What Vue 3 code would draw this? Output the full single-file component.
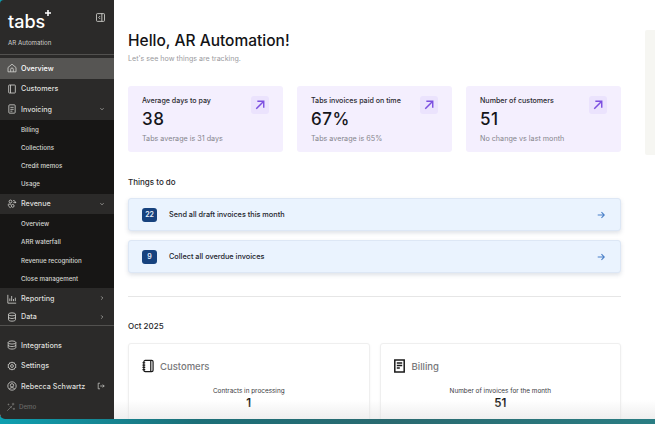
<script setup>
const stats = [
  { label: 'Average days to pay', value: '38', note: 'Tabs average is 31 days' },
  { label: 'Tabs invoices paid on time', value: '67%', note: 'Tabs average is 65%' },
  { label: 'Number of customers', value: '51', note: 'No change vs last month' }
]
const todos = [
  { count: '22', text: 'Send all draft invoices this month' },
  { count: '9', text: 'Collect all overdue invoices' }
]
</script>

<template>
  <div class="page">
    <div class="corner top"></div>
    <div class="corner bottom"></div>
    <aside class="side">
      <div class="brand">
        <span class="logo">tabs<svg class="plus" width="6" height="6" viewBox="0 0 7 7"><path d="M3.500 0v7M0 3.500h7" stroke="#fff" stroke-width="1.800"/></svg></span>
        <svg class="collapse" width="9" height="9" viewBox="0 0 10 10" fill="none" stroke="#d0d0cc" stroke-width="1"><rect x=".5" y=".7" width="9" height="8.600" rx="1"/><path d="M6.500 .7v8.600M4.600 3.400 3 5l1.600 1.600"/></svg>
      </div>
      <div class="org">AR Automation</div>
      <nav class="nav">
        <a class="item active">
          <svg class="ic" viewBox="0 0 12 12"><path d="M1.200 5.400 6 1.400l4.800 4v5.200H1.200z"/><path d="M4.400 10.600V7.600a1.600 1.600 0 0 1 3.200 0v3"/></svg>
          <span>Overview</span>
        </a>
        <a class="item">
          <svg class="ic" viewBox="0 0 12 12"><rect x="2" y="1.200" width="8" height="9.600" rx=".8"/><path d="M4.200 1.200v9.600"/></svg>
          <span>Customers</span>
        </a>
        <a class="item">
          <svg class="ic" viewBox="0 0 12 12"><rect x="2.200" y="1" width="7.600" height="10" rx="1"/><path d="M4 4h4M4 6.400h4M4 8.600h2.500"/></svg>
          <span>Invoicing</span>
          <svg class="chev" viewBox="0 0 6 6"><path d="M1.400 2.200 3 3.800l1.600-1.600"/></svg>
        </a>
        <div class="sub">
          <a>Billing</a><a>Collections</a><a>Credit memos</a><a>Usage</a>
        </div>
        <a class="item open">
          <svg class="ic" viewBox="0 0 12 12"><circle cx="4.200" cy="3" r="1.700"/><circle cx="6.800" cy="8.200" r="1.700"/><path d="M7.400 1.800c1.800.2 3 1.200 3.200 3M7.600 4.400h3.200M1.400 6.200h3.400M1.400 6.600c.2 2 1.400 3.400 3 3.800"/></svg>
          <span>Revenue</span>
          <svg class="chev" viewBox="0 0 6 6"><path d="M1.400 2.200 3 3.800l1.600-1.600"/></svg>
        </a>
        <div class="sub">
          <a>Overview</a><a>ARR waterfall</a><a>Revenue recognition</a><a>Close management</a>
        </div>
        <a class="item">
          <svg class="ic" viewBox="0 0 12 12"><path d="M1 1v10h10M3.400 8.600V5.400M5.600 8.600V2.400M7.800 8.600V6M10 8.600V4.400"/></svg>
          <span>Reporting</span>
          <svg class="chev" viewBox="0 0 6 6"><path d="M2.200 1.400 3.800 3 2.200 4.600"/></svg>
        </a>
        <a class="item last">
          <svg class="ic" viewBox="0 0 12 12"><ellipse cx="6" cy="2.800" rx="4.200" ry="1.800"/><path d="M1.800 2.800v6.400c0 1 1.900 1.800 4.200 1.800s4.200-.8 4.200-1.800V2.800M1.800 6c0 1 1.900 1.800 4.200 1.800s4.200-.8 4.200-1.800"/></svg>
          <span>Data</span>
          <svg class="chev" viewBox="0 0 6 6"><path d="M2.200 1.400 3.800 3 2.200 4.600"/></svg>
        </a>
      </nav>
      <div class="foot">
        <a class="item">
          <svg class="ic" viewBox="0 0 12 12"><ellipse cx="6" cy="3" rx="4.600" ry="1.900"/><path d="M1.400 3v6c0 1.100 2.100 1.900 4.600 1.900s4.600-.8 4.600-1.900V3M1.400 6c0 1.100 2.100 1.900 4.600 1.900s4.600-.8 4.600-1.900"/></svg>
          <span>Integrations</span>
        </a>
        <a class="item">
          <svg class="ic" viewBox="0 0 12 12"><circle cx="6" cy="6" r="1.700"/><path d="M6 1 7 2.300l1.700-.3.500 1.700 1.600.7-.6 1.600.6 1.600-1.600.7-.5 1.700L7 9.700 6 11 5 9.700l-1.700.3-.5-1.700-1.600-.7.6-1.600-.6-1.600 1.600-.7L3.300 2 5 2.300z"/></svg>
          <span>Settings</span>
        </a>
        <a class="item">
          <svg class="ic" viewBox="0 0 12 12"><circle cx="6" cy="6" r="5"/><circle cx="6" cy="5.200" r="2"/><path d="M2.800 9.800C3.600 8.400 4.800 8 6 8s2.400.4 3.200 1.800"/></svg>
          <span>Rebecca Schwartz</span>
          <svg class="logout" viewBox="0 0 10 10"><path d="M3.800 1.500H1.500v7h2.300M4 5h5M7.200 3.200 9 5 7.200 6.800"/></svg>
        </a>
        <a class="item demo">
          <svg class="ic" viewBox="0 0 12 12"><path d="M1.500 10.500 7.500 4.500M8.500 1v3M7 2.500h3M3 2v2M2 3h2M9.500 7v2.500M8.200 8.200h2.600M4.500 5 7 7.500"/></svg>
          <span>Demo</span>
        </a>
      </div>
    </aside>

    <main class="main">
      <h1>Hello, AR Automation!</h1>
      <p class="lead">Let's see how things are tracking.</p>

      <section class="stats">
        <div v-for="s in stats" :key="s.label" class="stat">
          <div>
            <div class="s-label">{{ s.label }}</div>
            <div class="s-value">{{ s.value }}</div>
            <div class="s-note">{{ s.note }}</div>
          </div>
          <span class="s-icon">
            <svg width="10" height="10" viewBox="0 0 12 12" fill="none" stroke="#7c4fe0" stroke-width="1.700"><path d="M1.500 10.500 10.500 1.500M2.800 1.500h7.700v7.700"/></svg>
          </span>
        </div>
      </section>

      <h2 class="todo-title">Things to do</h2>
      <section class="todos">
        <div v-for="t in todos" :key="t.text" class="todo">
          <span class="badge">{{ t.count }}</span>
          <span class="t-text">{{ t.text }}</span>
          <svg width="8" height="8" viewBox="0 0 9 9" fill="none" stroke="#4a80c8" stroke-width="1.200"><path d="M.8 4.500h7.400M5 1.300l3.200 3.200L5 7.700"/></svg>
        </div>
      </section>

      <hr class="rule" />

      <h2 class="month">Oct 2025</h2>
      <section class="panels">
        <div class="panel">
          <div class="p-head">
            <svg width="12" height="14" viewBox="0 0 13 14" fill="none" stroke="#1a1a1a" stroke-width="1.300"><rect x="2" y="1" width="10" height="12" rx="1.500"/><path d="M9.500 1v12M.5 3.500h3M.5 6h3M.5 8.500h3M.5 11h3"/></svg>
            <span>Customers</span>
          </div>
          <div class="p-label">Contracts in processing</div>
          <div class="p-value">1</div>
        </div>
        <div class="panel billing">
          <div class="p-head">
            <svg width="11" height="14" viewBox="0 0 11 14" fill="none" stroke="#1a1a1a" stroke-width="1.500"><path d="M.8 1h9.400v12H.8z"/><path d="M2.800 4h5.400M2.800 6.500h5.400M2.800 9h3"/></svg>
            <span>Billing</span>
          </div>
          <div class="p-label">Number of invoices for the month</div>
          <div class="p-value">51</div>
        </div>
      </section>
    </main>

    <div class="scrollpeek"></div>
    <div class="fade"></div>
    <div class="strip"></div>
  </div>
</template>

<style>
html, body { margin: 0; background: #fff; overflow: hidden; }
</style>

<style scoped>
.page {
  position: relative;
  width: 655px;
  height: 424px;
  overflow: hidden;
  display: flex;
  background: #fff;
  font-family: "Inter", "Liberation Sans", sans-serif;
  color: #1b1b1f;
  opacity: .999;
}
.corner { position: absolute; left: 0; width: 8px; height: 8px; background: #0e9fb0; }
.corner.top { top: 0; }
.corner.bottom { bottom: 0; }
.side {
  position: relative;
  z-index: 2;
  width: 114px;
  height: 419px;
  flex: none;
  background: #2b2a29;
  color: #dededb;
  display: flex;
  flex-direction: column;
  border-radius: 4px 0 0 5px;
}
.brand {
  height: 35px;
  padding: 0 9px 0 8px;
  display: flex;
  align-items: flex-end;
  justify-content: space-between;
}
.logo {
  font: 500 18px/22px "Inter", sans-serif;
  color: #fff;
  position: relative;
  margin-bottom: 2px;
}
.plus { position: absolute; right: -6px; top: -1px; }
.collapse { margin-bottom: 13px; }
.org {
  font-size: 6.200px;
  line-height: 10px;
  padding: 3px 0 6px 8px;
  height: 10px;
  color: #cfcfcc;
  border-bottom: 1px solid #52514f;
  margin-bottom: 3px;
}
.nav { display: flex; flex-direction: column; border-bottom: 1px solid #52514f; }
.item {
  height: 20.500px;
  padding: 0 7px;
  display: flex;
  align-items: center;
  gap: 4px;
  font-size: 7.200px;
  font-weight: 500;
  position: relative;
  flex: none;
}
.item.active { background: #565553; color: #fff; }
.item.last { height: 16px; }
.ic {
  width: 10px;
  height: 10px;
  flex: none;
  fill: none;
  stroke: #d0d0cc;
  stroke-width: 1;
}
.chev {
  position: absolute;
  right: 9px;
  top: 7px;
  width: 6px;
  height: 6px;
  fill: none;
  stroke: #bdbdb9;
  stroke-width: .7;
}
.item.last .chev { top: 5px; }
.logout {
  position: absolute;
  right: 9px;
  top: 6px;
  width: 8px;
  height: 8px;
  fill: none;
  stroke: #d0d0cc;
  stroke-width: .9;
}
.sub {
  background: #171615;
  display: flex;
  flex-direction: column;
  padding-top: 1px;
}
.sub a {
  height: 18.300px;
  line-height: 18.300px;
  padding-left: 21px;
  font-size: 6.200px;
  font-weight: 500;
  color: #d6d6d3;
  white-space: nowrap;
}
.foot { padding-top: 9px; display: flex; flex-direction: column; }
.demo { color: #6a6967; font-size: 6.200px; gap: 3px; padding-left: 6px; }
.demo .ic { stroke: #777674; }

.main {
  width: 493px;
  padding: 30px 0 0 14px;
  box-sizing: border-box;
}
h1 {
  margin: 0;
  font-size: 15.500px;
  line-height: 22px;
  font-weight: 500;
  color: #131316;
}
.lead {
  margin: 1px 0 0;
  font-size: 7.100px;
  line-height: 11px;
  color: #9a9a9e;
}
.stats {
  margin-top: 22px;
  display: flex;
  gap: 14px;
  width: 493px;
}
.stat {
  width: 155px;
  height: 66px;
  box-sizing: border-box;
  background: #f4effe;
  border-radius: 3px;
  padding: 9px 14px 0 14px;
  display: flex;
  justify-content: space-between;
  align-items: flex-start;
}
.s-label { font-size: 7.100px; line-height: 11px; color: #2a2a30; font-weight: 500; white-space: nowrap; }
.s-value {
  font-size: 17px;
  line-height: 21px;
  margin-top: 3px;
  font-weight: 500;
  color: #15151a;
  letter-spacing: .6px;
}
.s-note { font-size: 7.200px; line-height: 11px; margin-top: 3px; color: #85858c; white-space: nowrap; }
.s-icon {
  width: 18px;
  height: 18px;
  margin-top: 1px;
  background: #ebe3fd;
  border-radius: 3px;
  display: flex;
  align-items: center;
  justify-content: center;
}
h2 {
  margin: 0;
  font-size: 8px;
  line-height: 12px;
  font-weight: 500;
  color: #26262a;
}
.todo-title { margin-top: 24px; }
.todos { margin-top: 10px; width: 493px; display: flex; flex-direction: column; gap: 9px; }
.todo {
  height: 33px;
  box-sizing: border-box;
  background: #eaf3fe;
  border: 1px solid #dde7f5;
  border-radius: 3px;
  box-shadow: 0 2px 4px rgba(70, 90, 120, .18);
  display: flex;
  align-items: center;
  padding: 0 15px 0 13px;
}
.badge {
  min-width: 14px;
  height: 14px;
  line-height: 14px;
  background: #17427e;
  color: #e8effa;
  border-radius: 3px;
  font-size: 7px;
  font-weight: 600;
  text-align: center;
  padding: 0 .5px;
}
.t-text { flex: 1; margin-left: 12px; font-size: 7.300px; font-weight: 500; color: #22242c; }
.rule { margin: 23px 0 0; width: 493px; border: 0; border-top: 1px solid #e6e6e6; }
.month { margin-top: 23px; }
.panels { margin-top: 11px; display: flex; gap: 10px; width: 493px; }
.panel {
  flex: 1;
  height: 90px;
  box-sizing: border-box;
  border: 1px solid #efefef;
  border-radius: 3px;
  box-shadow: 0 1px 3px rgba(0, 0, 0, .05);
  padding: 15px 13px 0;
  background: #fff;
}
.p-head {
  display: flex;
  align-items: center;
  gap: 6px;
  font-size: 9.500px;
  font-weight: 500;
  color: #77777a;
  height: 14px;
}
.billing .p-head { gap: 7px; }
.p-label { margin-top: 14px; text-align: center; font-size: 6.400px; line-height: 9px; color: #3a3a3e; }
.p-value { margin-top: 1px; text-align: center; font-size: 11.500px; line-height: 13px; font-weight: 600; color: #1d1d20; }

.scrollpeek {
  position: absolute;
  left: 645px;
  top: 30px;
  width: 10px;
  height: 125px;
  background: #f6f6f2;
  border-radius: 2px 0 0 2px;
}
.fade {
  position: absolute;
  left: 114px;
  right: 0;
  top: 400px;
  height: 19px;
  background: linear-gradient(to bottom, rgba(235,235,235,0), rgba(225,225,225,.55));
  pointer-events: none;
}
.strip {
  position: absolute;
  left: 0;
  right: 0;
  bottom: 0;
  height: 5px;
  background: linear-gradient(to right, #0e9fb0, #1c6f78 30%, #2a6a70 60%, #2a7d83);
}
</style>
